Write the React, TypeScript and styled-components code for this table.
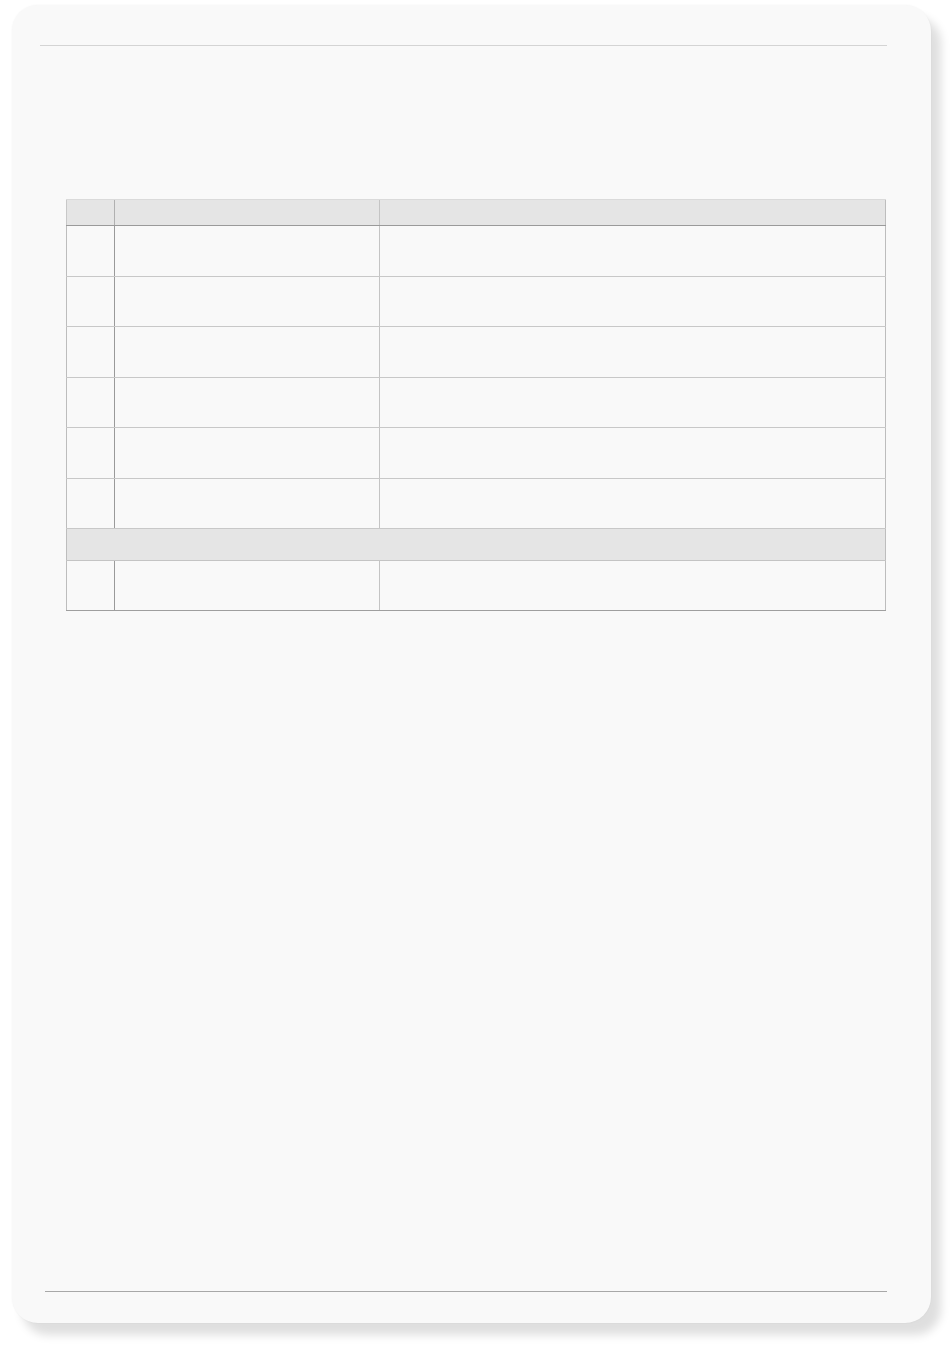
import styled, { createGlobalStyle } from 'styled-components';

const GlobalStyle = createGlobalStyle`
  body {
    margin: 0;
    background: #ffffff;
    font-family: 'Liberation Sans', Arial, sans-serif;
  }
`;

const ROW_COUNT = 6;

function App() {
  const rows = Array.from({ length: ROW_COUNT }, (_, i) => i);

  return (
    <>
      <GlobalStyle />
      <StyledPage>
        <StyledSheet>
          <StyledHeaderRule />
          <StyledTable>
            <colgroup>
              <col style={{ width: 48 }} />
              <col style={{ width: 265 }} />
              <col />
            </colgroup>
            <thead>
              <tr>
                <StyledHeadCell />
                <StyledHeadCell />
                <StyledHeadCell />
              </tr>
            </thead>
            <tbody>
              {rows.map(row => (
                <tr key={row}>
                  <StyledIndexCell />
                  <StyledCell />
                  <StyledCell $light />
                </tr>
              ))}
              <tr>
                <StyledGroupCell colSpan={3} />
              </tr>
              <tr>
                <StyledIndexCell $last />
                <StyledCell $last />
                <StyledCell $light $last />
              </tr>
            </tbody>
          </StyledTable>
          <StyledFooterRule />
        </StyledSheet>
      </StyledPage>
    </>
  );
}

const StyledPage = styled.div`
  padding: 5px 0 0 12px;
  height: 1364px;
  box-sizing: border-box;
`;

const StyledSheet = styled.div`
  display: flex;
  flex-direction: column;
  box-sizing: border-box;

  width: 919px;
  height: 1318px;
  padding: 40px 44px 31px 28px;
  border-radius: 26px;

  background: #f9f9f9;
  box-shadow: 10px 12px 10px rgba(0, 0, 0, 0.13), 0 0 2px rgba(0, 0, 0, 0.05);
`;

const StyledHeaderRule = styled.hr`
  width: 100%;
  height: 0;
  margin: 0;
  border: none;
  border-top: 1px solid #d4d4d4;
`;

const StyledFooterRule = styled.hr`
  width: calc(100% - 5px);
  height: 0;
  margin: auto 0 0 5px;
  border: none;
  border-top: 1px solid #a8a8a8;
`;

const StyledTable = styled.table`
  width: 820px;
  margin: 153px 0 0 26px;
  border-collapse: collapse;
  table-layout: fixed;
  border-left: 1px solid #bdbdbd;
  border-right: 1px solid #bdbdbd;
`;

const StyledHeadCell = styled.th`
  height: 25px;
  padding: 0;
  border-top: 1px solid #dadada;
  border-bottom: 1px solid #9a9a9a;
  border-left: 1px solid #b0b0b0;

  background: #e5e5e5;

  &:first-child {
    border-left: 1px solid #c8c8c8;
  }

  &:last-child {
    border-left: 1px solid #c4c4c4;
  }
`;

const StyledIndexCell = styled.td<{ $last?: boolean }>`
  height: ${({ $last }) => ($last ? '49px' : '49.5px')};
  padding: 0;
  border-right: 1px solid #9a9a9a;
  border-bottom: 1px solid ${({ $last }) => ($last ? '#9f9f9f' : '#c8c8c8')};
`;

const StyledCell = styled.td<{ $light?: boolean; $last?: boolean }>`
  height: ${({ $last }) => ($last ? '49px' : '49.5px')};
  padding: 0;
  border-right: 1px solid ${({ $light }) => ($light ? '#bdbdbd' : '#c4c4c4')};
  border-bottom: 1px solid ${({ $last }) => ($last ? '#9f9f9f' : '#c8c8c8')};
`;

const StyledGroupCell = styled.td`
  height: 31px;
  padding: 0;
  border-top: 1px solid #adadad;
  border-bottom: 1px solid #c4c4c4;

  background: #e5e5e5;
`;

export default App;
